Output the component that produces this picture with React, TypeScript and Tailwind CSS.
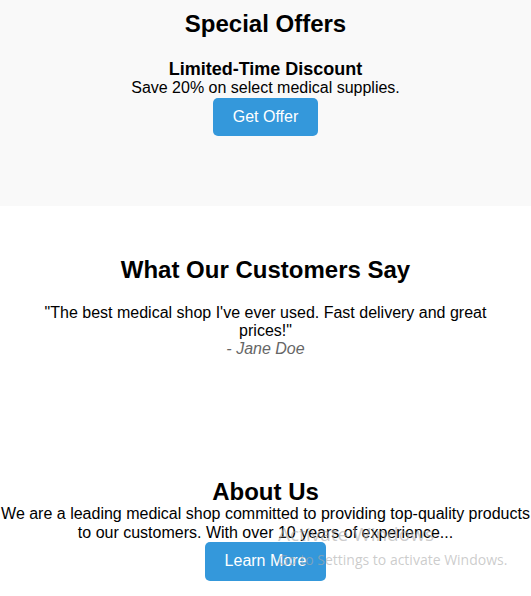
export default function App() {
  return (
    <div className="relative min-h-screen bg-white font-['Liberation_Sans',Arial,sans-serif] text-black overflow-hidden">
      {/* Special offers */}
      <section className="bg-[#f9f9f9] pt-[10px] pb-[70px] text-center">
        <h2 className="text-[24px] leading-[1.15] font-bold mb-[21px]">Special Offers</h2>
        <div className="flex flex-col items-center">
          <h3 className="text-[18px] leading-[1.15] font-bold">Limited-Time Discount</h3>
          <p className="text-[16px] leading-[1.15]">Save 20% on select medical supplies.</p>
          <button className="bg-[#3498db] text-white text-[16px] leading-[1.15] px-5 py-2.5 rounded-[5px]">
            Get Offer
          </button>
        </div>
      </section>

      {/* Testimonials */}
      <section className="pt-[50px] px-5 text-center">
        <h2 className="text-[24px] leading-[1.15] font-bold mb-5">What Our Customers Say</h2>
        <div>
          <p className="text-[16px] leading-[1.15]">
            "The best medical shop I've ever used. Fast delivery and great prices!"
          </p>
          <span className="block text-[16px] leading-[1.15] italic text-[#666]">- Jane Doe</span>
        </div>
      </section>

      {/* About */}
      <section className="mt-[119px] text-center flex flex-col items-center">
        <h2 className="text-[24px] leading-[1.15] font-bold">About Us</h2>
        <p className="text-[16px] leading-[1.15]">
          We are a leading medical shop committed to providing top-quality products to our
          customers. With over 10 years of experience...
        </p>
        <button className="bg-[#3498db] text-white text-[16px] leading-[1.15] px-5 py-2.5 rounded-[5px]">
          Learn More
        </button>
      </section>

      {/* OS watermark overlay */}
      <div className="absolute left-[278px] top-[522px] pointer-events-none font-['Open_Sans',sans-serif] text-[#aaaaaa]/60 leading-[1.3]">
        <div className="text-[19px]">Activate Windows</div>
        <div className="text-[14px] mt-[4px]">Go to Settings to activate Windows.</div>
      </div>
    </div>
  );
}
